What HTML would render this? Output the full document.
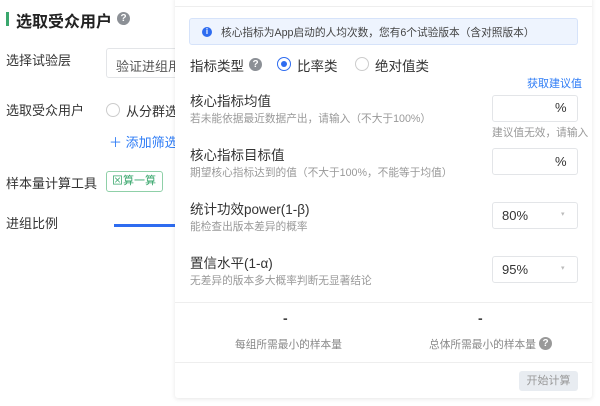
<!DOCTYPE html>
<html><head><meta charset="utf-8"><style>
*{margin:0;padding:0;box-sizing:border-box}
body{width:600px;height:406px;overflow:hidden;background:#fff;font-family:"Liberation Sans","Noto Sans CJK SC",sans-serif;color:#333;position:relative}
.a{position:absolute;white-space:nowrap}
.q{position:absolute;width:13px;height:13px;border-radius:50%;background:#8c9096;color:#fff;font-size:10px;font-weight:bold;text-align:center;line-height:13px}
.lbl{font-size:13px;color:#333}
.t{font-size:13.5px;color:#333}
.s{font-size:10.7px;color:#999}
.box{position:absolute;border:1px solid #e3e5e8;border-radius:3px;background:#fff}
</style></head><body>
<div class="a" style="left:6px;top:12px;width:3px;height:14px;background:#3aa76d"></div>
<div class="a" style="left:16px;top:8px;font-size:16px;font-weight:bold;color:#222">选取受众用户</div>
<div class="q" style="left:117px;top:12px">?</div>
<div class="a lbl" style="left:6px;top:50px">选择试验层</div>
<div class="box" style="left:106px;top:48px;width:90px;height:30px"></div>
<div class="a lbl" style="left:116px;top:56px;color:#555">验证进组用户</div>
<div class="a lbl" style="left:6px;top:100px">选取受众用户</div>
<div class="a" style="left:106px;top:103px;width:14px;height:14px;border:1px solid #ccc;border-radius:50%"></div>
<div class="a lbl" style="left:126px;top:101px">从分群选择</div>
<div class="a" style="left:109px;top:132px;font-size:13px;color:#2e7cf6">＋ 添加筛选</div>
<div class="a lbl" style="left:6px;top:173px">样本量计算工具</div>
<div class="a" style="left:106px;top:171px;width:57px;height:21px;border:1px solid #8fd0a8;border-radius:3px;font-size:11px;color:#3aa76d;line-height:19px;padding-left:5px">⊠算一算</div>
<div class="a lbl" style="left:6px;top:213px">进组比例</div>
<div class="a" style="left:114px;top:224px;width:62px;height:3px;background:#2e6cf0"></div>

<div class="a" style="left:175px;top:-4px;width:417px;height:402px;background:#fff;box-shadow:0 1px 5px rgba(0,0,0,0.1);border-radius:3px"></div>
<div class="a" style="left:175px;top:6px;width:417px;height:1px;background:#eee"></div>
<div class="a" style="left:189px;top:18px;width:389px;height:27px;background:#eef4fe;border:1px solid #d6e3fa;border-radius:3px"></div>
<div class="a" style="left:202px;top:27px;width:10px;height:10px;border-radius:50%;background:#2e6cf0;color:#fff;font-size:8px;text-align:center;line-height:10px;font-weight:bold">i</div>
<div class="a" style="left:221px;top:25px;font-size:10.7px;color:#444">核心指标为App启动的人均次数，您有6个试验版本（含对照版本）</div>
<div class="a t" style="left:190px;top:55px">指标类型</div>
<div class="q" style="left:249px;top:58px">?</div>
<div class="a" style="left:277px;top:57px;width:14px;height:14px;border:1px solid #2e6cf0;border-radius:50%"><div style="position:absolute;left:3px;top:3px;width:6px;height:6px;border-radius:50%;background:#2e6cf0"></div></div>
<div class="a t" style="left:297px;top:55px">比率类</div>
<div class="a" style="left:355px;top:57px;width:14px;height:14px;border:1px solid #ccc;border-radius:50%"></div>
<div class="a t" style="left:375px;top:55px">绝对值类</div>
<div class="a" style="left:527px;top:75px;font-size:11px;color:#2e7cf6">获取建议值</div>
<div class="a t" style="left:190px;top:90px">核心指标均值</div>
<div class="a s" style="left:190px;top:111px">若未能依据最近数据产出，请输入（不大于100%）</div>
<div class="box" style="left:492px;top:95px;width:86px;height:27px"></div>
<div class="a" style="left:555px;top:100px;font-size:13px">%</div>
<div class="a s" style="left:492px;top:125px">建议值无效，请输入</div>
<div class="a t" style="left:190px;top:144px">核心指标目标值</div>
<div class="a s" style="left:190px;top:165px">期望核心指标达到的值（不大于100%，不能等于均值）</div>
<div class="box" style="left:492px;top:148px;width:86px;height:27px"></div>
<div class="a" style="left:555px;top:154px;font-size:13px">%</div>
<div class="a t" style="left:190px;top:198px">统计功效power(1-β)</div>
<div class="a s" style="left:190px;top:219px">能检查出版本差异的概率</div>
<div class="box" style="left:492px;top:202px;width:86px;height:27px"></div>
<div class="a" style="left:502px;top:208px;font-size:13px">80%</div>
<div class="a" style="left:561px;top:210px;font-size:7px;color:#bbb">▾</div>
<div class="a t" style="left:190px;top:252px">置信水平(1-α)</div>
<div class="a s" style="left:190px;top:273px">无差异的版本多大概率判断无显著结论</div>
<div class="box" style="left:492px;top:256px;width:86px;height:27px"></div>
<div class="a" style="left:502px;top:262px;font-size:13px">95%</div>
<div class="a" style="left:561px;top:264px;font-size:7px;color:#bbb">▾</div>
<div class="a" style="left:175px;top:302px;width:417px;height:1px;background:#eee"></div>
<div class="a" style="left:283px;top:310px;font-size:14px;font-weight:bold;color:#444">-</div>
<div class="a s" style="left:235px;top:337px;color:#888">每组所需最小的样本量</div>
<div class="a" style="left:478px;top:310px;font-size:14px;font-weight:bold;color:#444">-</div>
<div class="a s" style="left:429px;top:337px;color:#888">总体所需最小的样本量</div>
<div class="q" style="left:539px;top:337px;background:#999">?</div>
<div class="a" style="left:175px;top:362px;width:417px;height:1px;background:#eee"></div>
<div class="a" style="left:519px;top:371px;width:59px;height:20px;background:#e8ecf1;border-radius:3px;font-size:11px;color:#999;text-align:center;line-height:20px">开始计算</div>
</body></html>
